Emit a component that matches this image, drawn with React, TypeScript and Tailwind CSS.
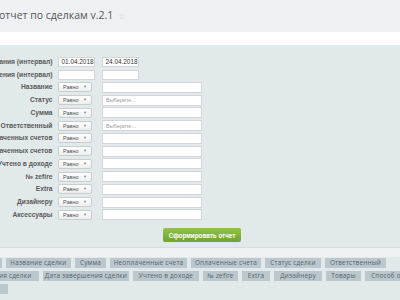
const rows = [
  { label: "Дата создания (интервал)", kind: "date", a: "01.04.2018", b: "24.04.2018" },
  { label: "Дата завершения (интервал)", kind: "date", a: "", b: "" },
  { label: "Название", kind: "text" },
  { label: "Статус", kind: "pick" },
  { label: "Сумма", kind: "text" },
  { label: "Ответственный", kind: "pick" },
  { label: "Сумма оплаченных счетов", kind: "text" },
  { label: "Сумма неоплаченных счетов", kind: "text" },
  { label: "Учтено в доходе", kind: "text" },
  { label: "№ zefire", kind: "text" },
  { label: "Extra", kind: "text" },
  { label: "Дизайнеру", kind: "text" },
  { label: "Аксессуары", kind: "text" },
]

// tag widths measured from the reference
const tagRows = [
  { ml: "-ml-[2px]", tags: [["", "w-[4px]"], ["Название сделки", "w-[65px]"], ["Сумма", "w-[31px]"], ["Неоплаченные счета", "w-[77px]"], ["Оплаченные счета", "w-[70px]"], ["Статус сделки", "w-[56px]"], ["Ответственный", "w-[61px]"]] },
  { ml: "-ml-[48px]", tags: [["Дата создания сделки", "w-[87px]"], ["Дата завершения сделки", "w-[86px]"], ["Учтено в доходе", "w-[66px]"], ["№ zefire", "w-[35px]"], ["Extra", "w-[28px]"], ["Дизайнеру", "w-[48px]"], ["Товары", "w-[35px]"], ["Способ оплаты", "w-[62px]"]] },
  { ml: "-ml-[1px]", tags: [["", "w-[9px]"]] },
]

function Select() {
  return (
    <div className="flex h-[10px] w-[34px] items-center justify-between rounded-[2px] border border-[#c9cdd0] bg-gradient-to-b from-white to-[#eceeef] px-[4px] text-[5.5px] text-[#555]">
      <span>Равно</span>
      <span className="text-[4px] text-[#888]">▼</span>
    </div>
  )
}

export default function App() {
  return (
    <div className="h-[300px] w-[400px] overflow-hidden bg-[#e2e9eb] font-['Liberation_Sans',sans-serif]">
      <div className="flex h-[32px] items-center gap-[5px] bg-[#eef1f3] font-['Open_Sans',sans-serif] text-[10.5px] text-[#555]">
        <span className="-ml-[1px]">отчет по сделкам v.2.1</span>
        <span className="text-[8px] text-[#ccc]">☆</span>
      </div>
      <div className="h-[13px] bg-white" />

      <div className="flex flex-col pt-[10.5px]">
        {rows.map((r, i) => (
          <div key={i} className="flex h-[12.75px] items-center">
            <div className="flex w-[52.5px] shrink-0 justify-end overflow-hidden whitespace-nowrap text-[6.7px] font-bold text-[#5a5a5a]">
              {r.label}
            </div>
            <div className="ml-[5.5px] flex items-center">
              {r.kind === "date" ? (
                <>
                  <div className="flex h-[10px] w-[37px] items-center border border-[#d3d6d8] bg-white px-[2.5px] text-[6.4px] text-[#333]">{r.a}</div>
                  <div className="ml-[7px] flex h-[10px] w-[37px] items-center border border-[#d3d6d8] bg-white px-[2.5px] text-[6.4px] text-[#333]">{r.b}</div>
                </>
              ) : (
                <>
                  <Select />
                  <div className="ml-[10px] flex h-[11px] w-[100px] items-center border border-[#d3d6d8] bg-white px-[3px] text-[5.5px] text-[#999]">
                    {r.kind === "pick" ? "Выберите..." : ""}
                  </div>
                </>
              )}
            </div>
          </div>
        ))}
      </div>

      <div className="mt-[7px] flex pl-[163px]">
        <button className="h-[14px] w-[78px] rounded-[2px] bg-gradient-to-b from-[#93c24a] to-[#6fa32c] text-[6.3px] font-bold text-white">
          Сформировать отчет
        </button>
      </div>

      <div className="mt-[5px] h-[1px] bg-[#d4dcdf]" />
      <div className="h-[9px] bg-[#eef1f2]" />
      <div className="flex flex-col gap-[3px] pt-[1px]">
        {tagRows.map((row, i) => (
          <div key={i} className={`flex gap-[4px] whitespace-nowrap ${row.ml}`}>
            {row.tags.map(([t, w], j) => (
              <div key={j} className={`flex h-[10px] shrink-0 items-center justify-center bg-[#bac7cc] font-['Open_Sans',sans-serif] text-[6.4px] tracking-[0.2px] text-[#55636a] ${w}`}>
                {t}
              </div>
            ))}
          </div>
        ))}
      </div>
    </div>
  )
}
